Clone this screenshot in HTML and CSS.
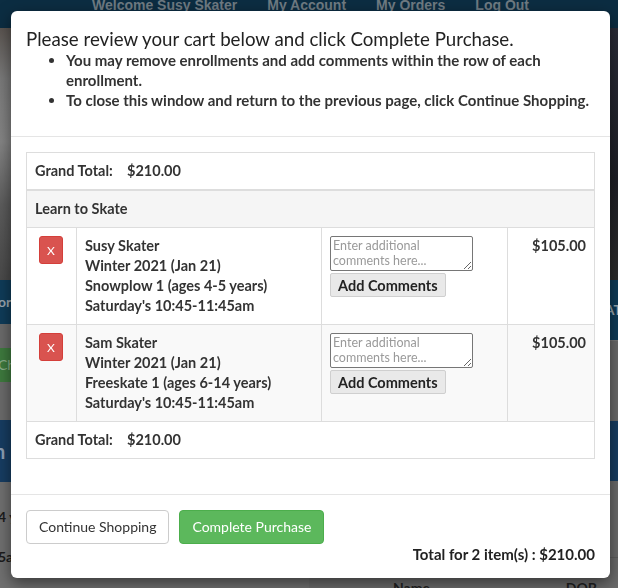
FILE: index.html
```html
<!DOCTYPE html>
<html lang="en">
<head>
<meta charset="utf-8">
<title>Cart</title>
<link rel="stylesheet" href="styles.css">
</head>
<body>
<div class="page">
  <nav class="topnav">
    <span>Welcome Susy Skater</span>
    <span>My Account</span>
    <span>My Orders</span>
    <span>Log Out</span>
  </nav>
  <div class="stacks">
    <div class="stack">
      <div class="blk photo-l"></div>
      <div class="blk blue-l"><span class="edge-txt">Ior</span></div>
      <div class="blk gray g1"></div>
      <div class="blk green-l"><span class="edge-txt thin">Ch</span></div>
      <div class="blk gray g2"></div>
      <div class="blk navy-l"><span class="edge-txt big">n</span></div>
      <div class="blk gray-b">
        <div class="edge-line">4 y</div>
        <div class="edge-line">5a</div>
      </div>
    </div>
    <div class="stack">
      <div class="blk photo-r"></div>
      <div class="blk blue-r"><span class="edge-txt right">AT</span></div>
      <div class="blk gray g3"></div>
      <div class="blk navy-r"></div>
      <div class="blk gray-r">
        <div class="bg-table"><span class="c1">Name</span><span class="c2">DOB</span></div>
      </div>
    </div>
  </div>
</div>

<div class="modal">
  <div class="modal-header">
    <h4 class="modal-title">Please review your cart below and click Complete Purchase.</h4>
    <ul class="notes">
      <li>You may remove enrollments and add comments within the row of each enrollment.</li>
      <li>To close this window and return to the previous page, click Continue Shopping.</li>
    </ul>
  </div>
  <div class="modal-body">
    <table class="cart">
      <colgroup>
        <col class="w1"><col class="w2"><col class="w3"><col class="w4">
      </colgroup>
      <tr>
        <td colspan="4"><span class="gt-label">Grand Total:</span>$210.00</td>
      </tr>
      <tr class="group">
        <td colspan="4">Learn to Skate</td>
      </tr>
      <tr>
        <td><button class="btn-x">X</button></td>
        <td>Susy Skater<br>Winter 2021 (Jan 21)<br>Snowplow 1 (ages 4-5 years)<br>Saturday's 10:45-11:45am</td>
        <td><textarea class="comment" placeholder="Enter additional comments here..."></textarea><button class="btn-add">Add Comments</button></td>
        <td class="price">$105.00</td>
      </tr>
      <tr class="alt">
        <td><button class="btn-x">X</button></td>
        <td>Sam Skater<br>Winter 2021 (Jan 21)<br>Freeskate 1 (ages 6-14 years)<br>Saturday's 10:45-11:45am</td>
        <td><textarea class="comment" placeholder="Enter additional comments here..."></textarea><button class="btn-add">Add Comments</button></td>
        <td class="price">$105.00</td>
      </tr>
      <tr>
        <td colspan="4"><span class="gt-label">Grand Total:</span>$210.00</td>
      </tr>
    </table>
  </div>
  <div class="modal-footer">
    <div class="actions">
      <button class="btn btn-default">Continue Shopping</button>
      <button class="btn btn-success">Complete Purchase</button>
    </div>
    <div class="total">Total for 2 item(s) : $210.00</div>
  </div>
</div>
</body>
</html>
```

FILE: styles.css
```css
html, body {
  margin: 0;
  padding: 0;
}
body {
  width: 618px;
  height: 588px;
  overflow: hidden;
  font-family: Lato, "Open Sans", "DejaVu Sans", sans-serif;
  background: #6c6c6c;
}

/* ---------- dimmed page behind the modal ---------- */
.page {
  width: 618px;
  height: 588px;
  display: flex;
  flex-direction: column;
}
.topnav {
  height: 28px;
  background: #0c2d42;
  display: flex;
  gap: 30px;
  padding-left: 92px;
  font-family: "Liberation Sans", Arial, sans-serif;
  font-weight: 700;
  font-size: 14px;
  line-height: 16px;
  color: #6f7b82;
  overflow: hidden;
}
.topnav span {
  margin-top: -3px;
}
.stacks {
  flex: 1;
  display: flex;
  justify-content: space-between;
}
.stack {
  width: 50%;
  display: flex;
  flex-direction: column;
}
.blk {
  overflow: hidden;
}
.photo-l {
  height: 252px;
  background: linear-gradient(180deg, #5a5450 0%, #7a7a7a 20%, #858585 45%, #5d5d5d 70%, #4a4a4a 100%);
}
.blue-l {
  height: 44px;
  background: #0f3c59;
}
.gray {
  background: #6b6b6b;
}
.g1 { height: 24px; }
.green-l {
  height: 34px;
  background: #3e7a3e;
}
.g2 { height: 38px; }
.navy-l {
  height: 62px;
  background: #173d62;
}
.gray-b {
  flex: 1;
  background: #707070;
  padding-top: 15px;
}
.photo-r {
  height: 252px;
  background: linear-gradient(180deg, #2a2c38 0%, #1e1f26 60%, #2c2c2c 100%);
}
.blue-r {
  height: 60px;
  background: #0e3a57;
}
.g3 {
  height: 80px;
  border-top: 1px solid #777;
  background: #6a6a6a;
}
.navy-r {
  height: 60px;
  background: #173d62;
}
.gray-r {
  flex: 1;
  background: #6b6b6b;
  display: flex;
  flex-direction: column;
  justify-content: flex-end;
}
.edge-txt {
  display: block;
  font-weight: 700;
  font-size: 14px;
  color: #9aa7b0;
  line-height: 44px;
  margin-left: -6px;
}
.edge-txt.thin {
  font-weight: 400;
  line-height: 34px;
  color: #8cb08c;
  margin-left: -2px;
}
.edge-txt.big {
  font-size: 20px;
  line-height: 62px;
  color: #8d9fb3;
  margin-left: -6px;
}
.edge-txt.right {
  text-align: right;
  margin-left: 0;
  margin-right: -4px;
  line-height: 60px;
}
.edge-line {
  font-weight: 700;
  font-size: 14px;
  color: #1c1c1c;
  line-height: 40px;
  margin-left: -2px;
}
.bg-table {
  height: 30px;
  border-top: 1px solid #5e5e5e;
  display: flex;
  font-weight: 700;
  font-size: 14px;
  color: #222;
  line-height: 60px;
}
.bg-table .c1 { margin-left: 84px; }
.bg-table .c2 { margin-left: auto; margin-right: 21px; }

/* ---------- modal ---------- */
.modal {
  position: fixed;
  left: 11px;
  top: 11px;
  width: 599px;
  background: #fff;
  border-radius: 6px;
  box-shadow: 0 5px 15px rgba(0, 0, 0, 0.5);
  color: #333;
}
.modal-header {
  padding: 15px 15px 26px;
  border-bottom: 1px solid #e5e5e5;
}
.modal-title {
  margin: 2px 0 0;
  font-size: 18.7px;
  line-height: 22px;
  font-weight: 400;
  color: #222;
}
.notes {
  margin: 0;
  padding-left: 40px;
  font-size: 15px;
  line-height: 20px;
  font-weight: 700;
}

.modal-body {
  padding: 15px;
}
.cart {
  width: 100%;
  border-collapse: collapse;
  table-layout: fixed;
  margin-bottom: 20px;
  border: 1px solid #ddd;
  font-size: 14.5px;
  font-weight: 700;
  line-height: 20px;
}
.cart .w1 { width: 50px; }
.cart .w2 { width: 245px; }
.cart .w3 { width: 186px; }
.cart td {
  padding: 8px;
  border: 1px solid #ddd;
  vertical-align: top;
}
.cart tr.group td {
  background: #f5f5f5;
  border-top: 2px solid #ddd;
}
.cart tr.alt td {
  background: #f9f9f9;
}
.gt-label {
  display: inline-block;
  width: 92px;
}
.price {
  text-align: right;
}
.btn-x {
  display: block;
  margin-left: 4px;
  width: 24px;
  height: 28px;
  padding: 0;
  background: #d9534f;
  border: 1px solid #d43f3a;
  border-radius: 3px;
  color: #fff;
  font-family: Lato, "Open Sans", sans-serif;
  font-size: 12px;
  font-weight: 400;
}
.comment {
  display: block;
  box-sizing: border-box;
  width: 143px;
  height: 35px;
  margin: 0;
  padding: 1px 2px;
  border: 1px solid #767676;
  border-radius: 2px;
  font-family: Lato, "Open Sans", sans-serif;
  font-size: 12.5px;
  line-height: 15px;
  resize: both;
}
.comment::placeholder {
  color: #9a9a9a;
}
.btn-add {
  display: block;
  margin-top: 2px;
  height: 24px;
  padding: 0 7px;
  background: #e9e9e9;
  border: 1px solid #cfcfcf;
  border-radius: 2px;
  color: #222;
  font-family: Lato, "Open Sans", sans-serif;
  font-size: 14.5px;
  font-weight: 700;
}

.modal-footer {
  padding: 15px 15px 14px;
  border-top: 1px solid #e5e5e5;
}
.actions {
  display: flex;
  gap: 10px;
}
.btn {
  padding: 6px 12px;
  font-family: Lato, "Open Sans", sans-serif;
  font-size: 14px;
  line-height: 20px;
  border: 1px solid transparent;
  border-radius: 4px;
}
.btn-default {
  background: #fff;
  border-color: #ccc;
  color: #333;
}
.btn-success {
  background: #5cb85c;
  border-color: #4cae4c;
  color: #fff;
}
.total {
  text-align: right;
  font-size: 15px;
  font-weight: 700;
  line-height: 20px;
  color: #222;
}
```
